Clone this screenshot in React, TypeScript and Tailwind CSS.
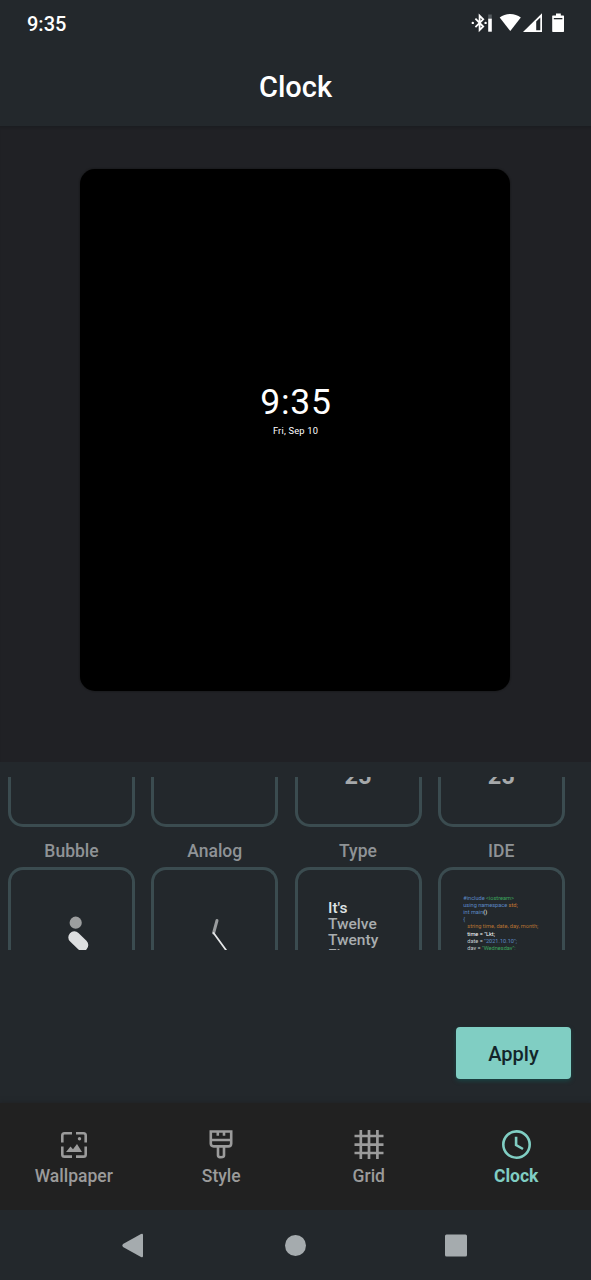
import type { ReactNode } from "react";

function StatusIcons() {
  return (
    <svg width="96" height="22" viewBox="0 0 96 22" fill="#fff">
      <path d="M5.4 5.7 L13.2 13.5 L9.6 17.1 V2.7 L13.2 6.3 L5.4 14.1" fill="none" stroke="#fff" strokeWidth="1.8" />
      <circle cx="2.8" cy="9.9" r="1.2" />
      <circle cx="15.6" cy="9.9" r="1.2" />
      <rect x="18.2" y="1.5" width="3.6" height="5" fill="#555b5f" />
      <rect x="18.2" y="5.7" width="3.6" height="13" />
      <path d="M29.7 4.6 C35.5 -0.3 45 -0.3 50.8 4.6 L40.3 18.1 Z" />
      <path d="M72 0.2 V19 H53 Z" />
      <path d="M66.2 8.4 L70.3 4.4 V17.3 H66.2 Z" fill="#23282c" />
      <path d="M83.4 2.4 H86 V0.4 H90.8 V2.4 H93.4 Q94 2.4 94 3.1 V18.3 Q94 19 93.4 19 H82.8 Q82.2 19 82.2 18.3 V3.1 Q82.2 2.4 82.8 2.4 Z" />
      <rect x="83.8" y="5" width="8.6" height="1.3" fill="#23282c" />
    </svg>
  );
}

function OptionEnd({ children }: { children?: ReactNode }) {
  return (
    <div className="flex h-[50px] w-[127px] justify-center overflow-hidden rounded-b-[15px] border-3 border-t-0 border-[#3b4c50]">
      {children}
    </div>
  );
}

function Option({ children }: { children: ReactNode }) {
  return (
    <div className="h-[83px] w-[127px] overflow-hidden rounded-t-[15px] border-3 border-b-0 border-[#3b4c50]">
      {children}
    </div>
  );
}

function Tab({ label, active, children }: { label: string; active?: boolean; children: ReactNode }) {
  return (
    <div className={active ? "flex flex-1 flex-col items-center text-[#80cec3]" : "flex flex-1 flex-col items-center text-[#9b9b9b]"}>
      <svg width="36" height="36" viewBox="0 0 36 36" fill="none" stroke="currentColor" strokeWidth="2.6">
        {children}
      </svg>
      <span className={active ? "pt-[2px] text-[17.5px] leading-[24px] font-bold" : "pt-[2px] text-[17.5px] leading-[24px] font-medium"}>{label}</span>
    </div>
  );
}

const labels = ["Bubble", "Analog", "Type", "IDE"];

export default function App() {
  return (
    <div className="flex h-[1280px] w-[591px] flex-col overflow-hidden bg-[#23282c] font-[Roboto,sans-serif]">
      <header className="flex h-[126px] flex-col">
        <div className="flex h-[48px] items-center justify-between pr-[25px] pl-[27px]">
          <span className="text-[20px] font-medium text-white">9:35</span>
          <StatusIcons />
        </div>
        <h1 className="text-center text-[29px] leading-[78px] font-medium text-white">Clock</h1>
      </header>

      <main className="flex h-[636px] flex-col items-center bg-[#202125] pt-[43px] pr-[1px] shadow-[inset_0_3px_3px_-2px_#1a1c1f]">
        <div className="flex h-[522px] w-[430px] flex-col items-center rounded-[15px] bg-black pt-[212px] text-white shadow-[0_0_2px_#111]">
          <div className="pl-[2px] text-[35.5px] leading-[43px] tracking-[0.8px]">9:35</div>
          <div className="pl-[1px] text-[9.3px] leading-[14px] tracking-[0.2px]">Fri, Sep 10</div>
        </div>
      </main>

      <section className="flex h-[341px] flex-col bg-[#23282c] pt-[15px]">
        <div className="grid h-[173px] w-[581px] grid-cols-4 grid-rows-[50px_40px_83px] overflow-hidden pl-[8px]">
          <OptionEnd />
          <OptionEnd />
          <OptionEnd>
            <span className="-mt-[16px] text-[23.5px] leading-[30px] font-bold text-[#a5a8aa]">25</span>
          </OptionEnd>
          <OptionEnd>
            <span className="-mt-[16px] text-[23.5px] leading-[30px] font-bold text-[#a5a8aa]">25</span>
          </OptionEnd>
          {labels.map((label) => (
            <span key={label} className="w-[127px] pt-[12px] text-center text-[17.5px] leading-[24px] font-medium text-[#8f9396]">
              {label}
            </span>
          ))}
          <Option>
            <svg width="121" height="80" viewBox="0 0 121 80">
              <circle cx="64.7" cy="52.7" r="6.1" fill="#9c9e9f" />
              <path d="M63.3 67.3 L71.3 75" stroke="#dddfe0" strokeWidth="12" strokeLinecap="round" />
            </svg>
          </Option>
          <Option>
            <svg width="121" height="80" viewBox="0 0 121 80" fill="none" strokeLinecap="round">
              <path d="M63 50.5 L59.6 63" stroke="#999c9e" strokeWidth="3" />
              <path d="M59.6 63 L72 80" stroke="#e4e6e7" strokeWidth="1.8" />
            </svg>
          </Option>
          <Option>
            <div className="pt-[30px] pl-[30.5px] text-[15.5px] leading-[16px] font-medium text-[#a9adaf]">
              <div className="text-[#dfe2e4]">It's</div>
              <div>Twelve</div>
              <div>Twenty</div>
              <div className="-mt-[1px]">Five</div>
            </div>
          </Option>
          <Option>
            <div className="pt-[24.5px] pl-[22.5px] text-[5.6px] leading-[7.2px] whitespace-pre text-[#5c88c5]">
              <div>#include <span className="text-[#3ca55d]">&lt;iostream&gt;</span></div>
              <div>using namespace <span className="text-[#cc7832]">std;</span></div>
              <div>int main<span className="text-white">()</span></div>
              <div>{"{"}</div>
              <div className="pl-[4px] text-[#b87333]">string time, date, day, month;</div>
              <div className="pl-[4px] text-white">time = "Lkt;</div>
              <div className="pl-[4px]"><span className="text-[#c8cdd0]">date = </span>"2021.10.10";</div>
              <div className="pl-[4px] text-[#3ca55d]"><span className="text-[#c8cdd0]">day = </span>"Wednesday";</div>
            </div>
          </Option>
        </div>
        <div className="flex justify-end pt-[77px] pr-[20px]">
          <button className="h-[52px] w-[115px] rounded-[4px] bg-[#80cec3] pt-[2px] text-[20px] font-medium text-[#13252a] shadow-[0_2px_4px_#1a4444]">Apply</button>
        </div>
      </section>

      <nav className="flex h-[107px] bg-[#212121] pt-[23px] pr-[1px] shadow-[0_-1px_4px_#202326]">
        <Tab label="Wallpaper">
          <path d="M16 7.2 H8.5 Q6.3 7.2 6.3 9.4 V16.5 M20 7.2 H27.5 Q29.7 7.2 29.7 9.4 V16.5 M6.3 20.5 V28.4 Q6.3 30.6 8.5 30.6 H16 M29.7 20.5 V28.4 Q29.7 30.6 27.5 30.6 H20" />
          <path d="M10 26 L14.5 20.5 L17 23.2 L21 18 L26 26 Z" fill="currentColor" stroke="none" />
          <circle cx="23.5" cy="12.8" r="1.7" fill="currentColor" stroke="none" />
        </Tab>
        <Tab label="Style">
          <path d="M7.8 5.5 H28.2 V17.5 Q28.2 20.4 25.3 20.4 H21 V29.5 Q21 31.2 18 31.2 Q15 31.2 15 29.5 V20.4 H10.7 Q7.8 20.4 7.8 17.5 Z M7.8 14 H28.2 M15 20.4 H21 M14.8 5.5 V9.8 M21 5.5 V9.8" />
        </Tab>
        <Tab label="Grid">
          <path d="M9.8 4 V33 M18 4 V33 M26.4 4 V33 M3.5 10 H32.5 M3.5 18.6 H32.5 M3.5 27 H32.5" strokeWidth="2.7" />
        </Tab>
        <Tab label="Clock" active>
          <circle cx="18.5" cy="18.6" r="13.2" />
          <path d="M18.1 10.8 V19 L25 23" />
        </Tab>
      </nav>

      <footer className="h-[70px] bg-[#23282c]">
        <svg width="591" height="70" viewBox="0 0 591 70" fill="#a5abae">
          <path d="M123 34 L141 24 Q143 23 143 25 V46 Q143 48 141 47 L123 37 Q121.5 35.5 123 34 Z" />
          <circle cx="295.5" cy="35.5" r="10.5" />
          <rect x="445" y="24.5" width="22" height="22" rx="1.5" />
        </svg>
      </footer>
    </div>
  );
}
